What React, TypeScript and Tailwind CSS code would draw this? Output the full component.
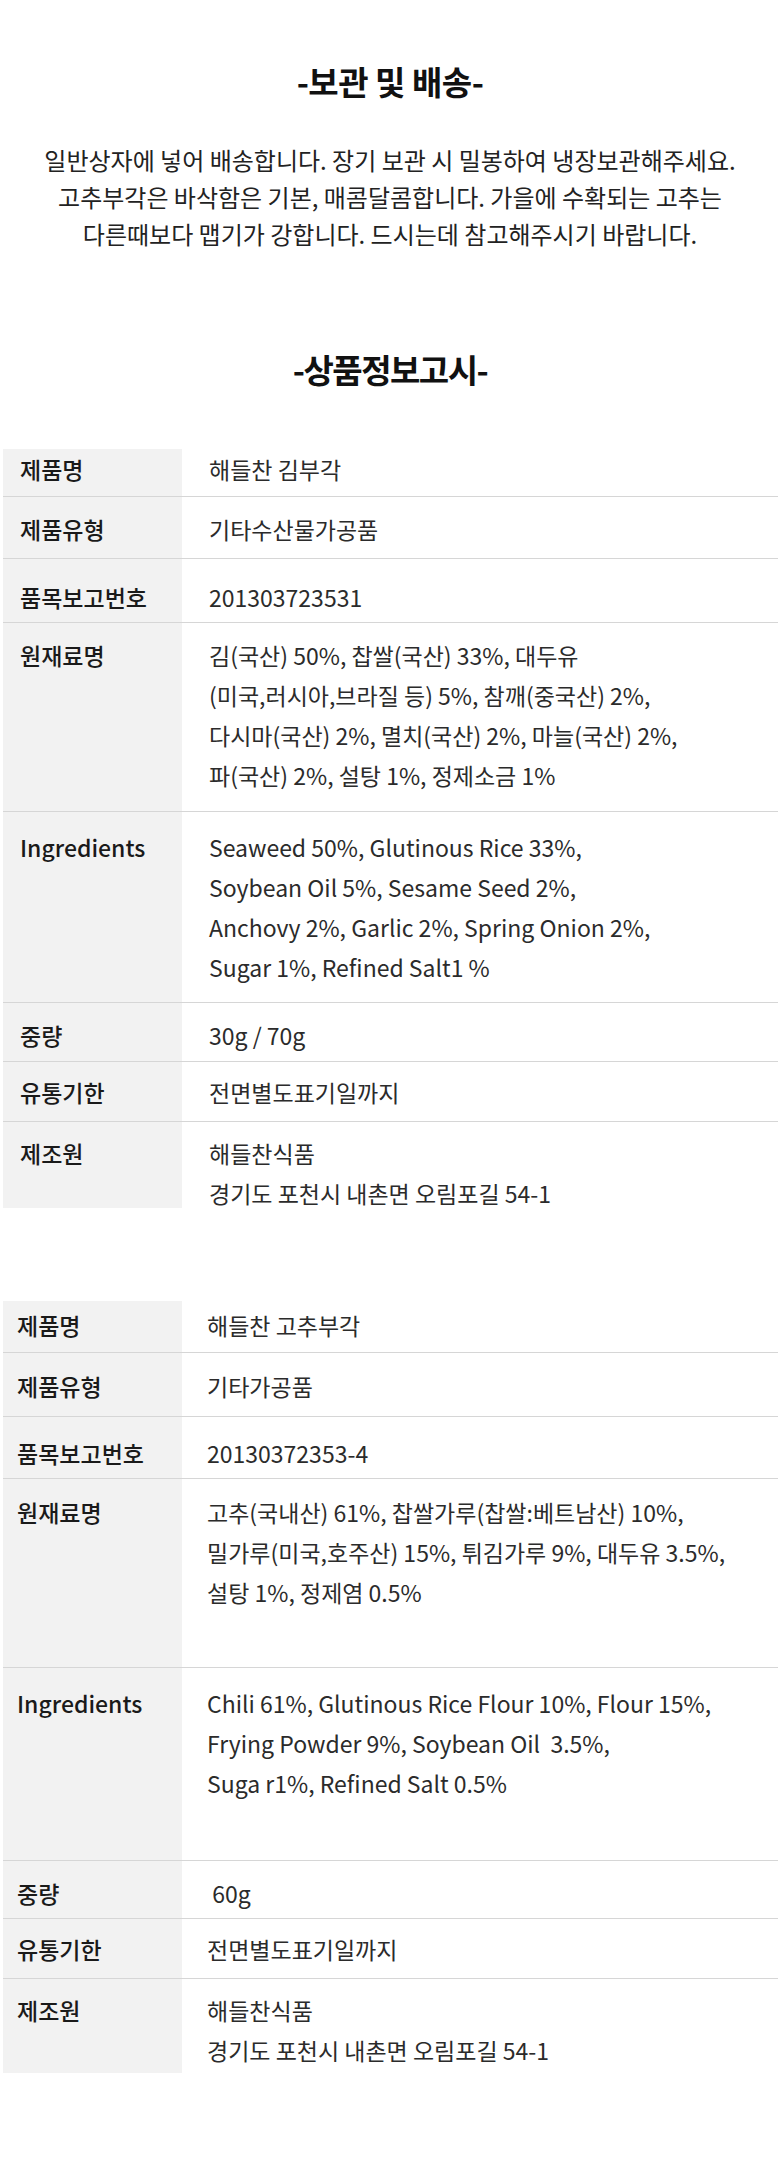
import React from 'react';

type Row = {
  label: string;
  lines: string[];
  h: string; // row height
  pt: string; // top padding of the text
};

const kimRows: Row[] = [
  { label: '제품명', lines: ['해들찬 김부각'], h: 'h-[47px]', pt: 'pt-[0px]' },
  { label: '제품유형', lines: ['기타수산물가공품'], h: 'h-[62px]', pt: 'pt-[12px]' },
  { label: '품목보고번호', lines: ['201303723531'], h: 'h-[64px]', pt: 'pt-[18px]' },
  {
    label: '원재료명',
    lines: [
      '김(국산) 50%, 찹쌀(국산) 33%, 대두유',
      '(미국,러시아,브라질 등) 5%, 참깨(중국산) 2%,',
      '다시마(국산) 2%, 멸치(국산) 2%, 마늘(국산) 2%,',
      '파(국산) 2%, 설탕 1%, 정제소금 1%',
    ],
    h: 'h-[189px]',
    pt: 'pt-[12px]',
  },
  {
    label: 'Ingredients',
    lines: [
      'Seaweed 50%, Glutinous Rice 33%,',
      'Soybean Oil 5%, Sesame Seed 2%,',
      'Anchovy 2%, Garlic 2%, Spring Onion 2%,',
      'Sugar 1%, Refined Salt1 %',
    ],
    h: 'h-[191px]',
    pt: 'pt-[15px]',
  },
  { label: '중량', lines: ['30g / 70g'], h: 'h-[59px]', pt: 'pt-[12px]' },
  { label: '유통기한', lines: ['전면별도표기일까지'], h: 'h-[60px]', pt: 'pt-[10px]' },
  { label: '제조원', lines: ['해들찬식품', '경기도 포천시 내촌면 오림포길 54-1'], h: 'h-[87px]', pt: 'pt-[11px]' },
];

const chiliRows: Row[] = [
  { label: '제품명', lines: ['해들찬 고추부각'], h: 'h-[51px]', pt: 'pt-[4px]' },
  { label: '제품유형', lines: ['기타가공품'], h: 'h-[64px]', pt: 'pt-[13px]' },
  { label: '품목보고번호', lines: ['20130372353-4'], h: 'h-[62px]', pt: 'pt-[16px]' },
  {
    label: '원재료명',
    lines: [
      '고추(국내산) 61%, 찹쌀가루(찹쌀:베트남산) 10%,',
      '밀가루(미국,호주산) 15%, 튀김가루 9%, 대두유 3.5%,',
      '설탕 1%, 정제염 0.5%',
    ],
    h: 'h-[189px]',
    pt: 'pt-[13px]',
  },
  {
    label: 'Ingredients',
    lines: [
      'Chili 61%, Glutinous Rice Flour 10%, Flour 15%,',
      'Frying Powder 9%, Soybean Oil  3.5%,',
      'Suga r1%, Refined Salt 0.5%',
    ],
    h: 'h-[193px]',
    pt: 'pt-[15px]',
  },
  { label: '중량', lines: [' 60g'], h: 'h-[58px]', pt: 'pt-[12px]' },
  { label: '유통기한', lines: ['전면별도표기일까지'], h: 'h-[60px]', pt: 'pt-[10px]' },
  { label: '제조원', lines: ['해들찬식품', '경기도 포천시 내촌면 오림포길 54-1'], h: 'h-[95px]', pt: 'pt-[11px]' },
];

const InfoTable = ({ rows, labelPad, valuePad }: { rows: Row[]; labelPad: string; valuePad: string }) => (
  <div className="ml-[3px] mr-[2px] text-[23px] leading-[40px]">
    {rows.map((r, i) => (
      <div key={r.label} className={`flex ${i > 0 ? 'border-t border-[#d6d6d6]' : ''} ${r.h}`}>
        <div className={`w-[179px] shrink-0 bg-[#f2f2f2] ${labelPad} ${r.pt}`}>
          <span className="font-medium text-[#1a1a1a]">{r.label}</span>
        </div>
        <div className={`flex-1 ${valuePad} ${r.pt}`}>
          {r.lines.map((l, j) => (
            <div key={j} className="whitespace-pre text-[#2b2b2b]">
              {l}
            </div>
          ))}
        </div>
      </div>
    ))}
  </div>
);

export default function App() {
  return (
    <div
      className="w-[780px] h-[2163px] bg-white text-[#222]"
      style={{ fontFamily: '"Noto Sans CJK KR", "Noto Sans", sans-serif' }}
    >
      {/* 보관 및 배송 */}
      <section className="pt-[60px] text-center">
        <h2 className="text-[33px] leading-[42px] font-bold text-[#111] tracking-[-0.5px]">-보관 및 배송-</h2>
        <div className="mt-[39px] text-[24px] leading-[37px] text-[#222]">
          <p>일반상자에 넣어 배송합니다. 장기 보관 시 밀봉하여 냉장보관해주세요.</p>
          <p>고추부각은 바삭함은 기본, 매콤달콤합니다. 가을에 수확되는 고추는</p>
          <p>다른때보다 맵기가 강합니다. 드시는데 참고해주시기 바랍니다.</p>
        </div>
      </section>

      {/* 상품정보고시 */}
      <section className="pt-[96px] text-center">
        <h2 className="text-[33px] leading-[42px] font-bold text-[#111] tracking-[-1.5px]">-상품정보고시-</h2>
      </section>

      <div className="mt-[59px]">
        <InfoTable rows={kimRows} labelPad="pl-[17px]" valuePad="pl-[27px]" />
      </div>

      <div className="mt-[93px]">
        <InfoTable rows={chiliRows} labelPad="pl-[14px]" valuePad="pl-[25px]" />
      </div>
    </div>
  );
}
